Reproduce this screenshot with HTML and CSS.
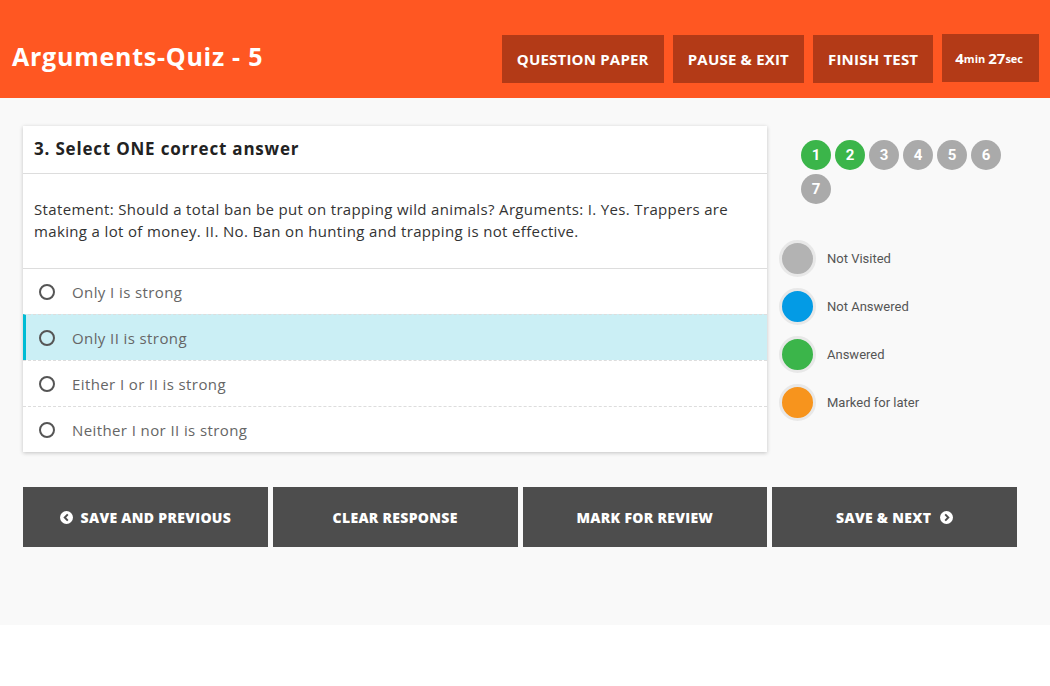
FILE: index.html
```html
<!DOCTYPE html>
<html>
<head>
	<title>Arguments-Quiz - 5</title>
	<link rel="stylesheet" href="styles.css">
</head>
<body>
	<div class="topbar">
		<h1 class="quizTitle">Arguments-Quiz - 5</h1>
		<div class="topButtons">
			<a class="topBtn">QUESTION PAPER</a>
			<a class="topBtn">PAUSE &amp; EXIT</a>
			<a class="topBtn">FINISH TEST</a>
			<div class="timer">4<small>min</small> 27<small>sec</small></div>
		</div>
	</div>

	<div class="main">
		<div class="row">
			<div class="card">
				<div class="cardHead">3. Select ONE correct answer</div>
				<div class="statement">Statement: Should a total ban be put on trapping wild animals? Arguments: I. Yes. Trappers are making a lot of money. II. No. Ban on hunting and trapping is not effective.</div>
				<div class="option"><span class="radio"></span>Only I is strong</div>
				<div class="option active"><span class="radio"></span>Only II is strong</div>
				<div class="option"><span class="radio"></span>Either I or II is strong</div>
				<div class="option"><span class="radio"></span>Neither I nor II is strong</div>
			</div>

			<div class="side">
				<div class="palette">
					<span class="qnum done">1</span>
					<span class="qnum done">2</span>
					<span class="qnum">3</span>
					<span class="qnum">4</span>
					<span class="qnum">5</span>
					<span class="qnum">6</span>
					<span class="qnum">7</span>
				</div>
				<div class="legend">
					<div class="legendRow"><span class="dot grey"></span>Not Visited</div>
					<div class="legendRow"><span class="dot blue"></span>Not Answered</div>
					<div class="legendRow"><span class="dot green"></span>Answered</div>
					<div class="legendRow"><span class="dot orange"></span>Marked for later</div>
				</div>
			</div>
		</div>

		<div class="actions">
			<a class="actBtn">
				<svg class="chev" width="13" height="13" viewBox="0 0 16 16"><circle cx="8" cy="8" r="8" fill="#fff"/><path d="M9.6 4.2 5.8 8l3.8 3.8" stroke="#4d4d4d" stroke-width="2.4" fill="none"/></svg>
				SAVE AND PREVIOUS
			</a>
			<a class="actBtn">CLEAR RESPONSE</a>
			<a class="actBtn">MARK FOR REVIEW</a>
			<a class="actBtn">
				SAVE &amp; NEXT
				<svg class="chev next" width="13" height="13" viewBox="0 0 16 16"><circle cx="8" cy="8" r="8" fill="#fff"/><path d="M6.4 4.2 10.2 8l-3.8 3.8" stroke="#4d4d4d" stroke-width="2.4" fill="none"/></svg>
			</a>
		</div>
	</div>
</body>
</html>
```

FILE: styles.css
```css
body{
	margin: 0;
	background: #fff;
	font-family: "Open Sans", "Liberation Sans", sans-serif;
}

.topbar{
	height: 98px;
	background: #ff5722;
	display: flex;
	align-items: flex-end;
	justify-content: space-between;
	padding: 0 11px 15px 12px;
	box-sizing: border-box;
}
.quizTitle{
	margin: 0 0 10px 0;
	color: #fff;
	font-size: 25px;
	font-weight: 700;
	letter-spacing: 0.75px;
}
.topButtons{
	display: flex;
	gap: 9px;
	align-items: flex-start;
}
.topBtn{
	display: flex;
	align-items: center;
	justify-content: center;
	height: 48px;
	padding: 0 15px;
	background: #b33a17;
	color: #fff;
	font-size: 15px;
	font-weight: 700;
	letter-spacing: 0.2px;
}
.timer{
	display: flex;
	align-items: center;
	justify-content: center;
	height: 48px;
	margin-top: -1px;
	padding: 0 13px;
	background: #b33a17;
	color: #fff;
	font-size: 15px;
	font-weight: 700;
}
.timer small{
	font-size: 11px;
	margin-right: 3px;
}

.main{
	background: #f9f9f9;
	padding: 28px 0 78px 23px;
}
.row{
	display: flex;
}
.card{
	width: 744px;
	background: #fff;
	box-shadow: 0 1px 4px rgba(0,0,0,0.22);
}
.cardHead{
	height: 47px;
	line-height: 46px;
	padding-left: 11px;
	font-size: 17px;
	font-weight: 700;
	letter-spacing: 0.8px;
	color: #222;
	border-bottom: 1px solid #ddd;
}
.statement{
	padding: 24px 11px 26px 11px;
	font-size: 15px;
	letter-spacing: 0.35px;
	line-height: 22px;
	color: #333;
	border-bottom: 1px solid #ddd;
}
.option{
	display: flex;
	align-items: center;
	height: 45px;
	padding-left: 16px;
	font-size: 15px;
	letter-spacing: 0.4px;
	color: #666;
	border-top: 1px dashed #ddd;
}
.option:nth-child(3){
	border-top: none;
}
.option.active{
	background: #cbeff5;
	border-left: 3px solid #00bcd4;
	padding-left: 13px;
}
.radio{
	width: 12px;
	height: 12px;
	border: 2px solid #555;
	border-radius: 50%;
	margin-right: 17px;
}

.side{
	width: 240px;
	padding-left: 14px;
}
.palette{
	display: flex;
	flex-wrap: wrap;
	gap: 4px;
	width: 210px;
	padding: 14px 0 0 20px;
}
.qnum{
	width: 30px;
	height: 30px;
	border-radius: 50%;
	background: #aaa;
	color: #fff;
	font-family: Roboto, sans-serif;
	font-weight: 700;
	font-size: 15px;
	display: flex;
	align-items: center;
	justify-content: center;
}
.qnum.done{
	background: #3bb54a;
}
.legend{
	margin-top: 30px;
}
.legendRow{
	display: flex;
	align-items: center;
	height: 48px;
	font-family: Roboto, sans-serif;
	font-size: 13px;
	color: #555;
}
.dot{
	width: 31px;
	height: 31px;
	border-radius: 50%;
	border: 3px solid #e8e8e8;
	margin-right: 11px;
	margin-left: -2px;
}
.grey{ background: #b3b3b3; }
.blue{ background: #039be5; }
.green{ background: #3bb54a; }
.orange{ background: #f7941d; }

.actions{
	display: flex;
	gap: 5px;
	margin-top: 35px;
	width: 994px;
}
.actBtn{
	flex: 1;
	height: 60px;
	display: flex;
	align-items: center;
	justify-content: center;
	background: #4d4d4d;
	color: #fff;
	font-size: 14px;
	font-weight: 800;
	letter-spacing: 0.3px;
}
.chev{
	margin-right: 8px;
}
.chev.next{
	margin: 0 0 0 9px;
}
```
